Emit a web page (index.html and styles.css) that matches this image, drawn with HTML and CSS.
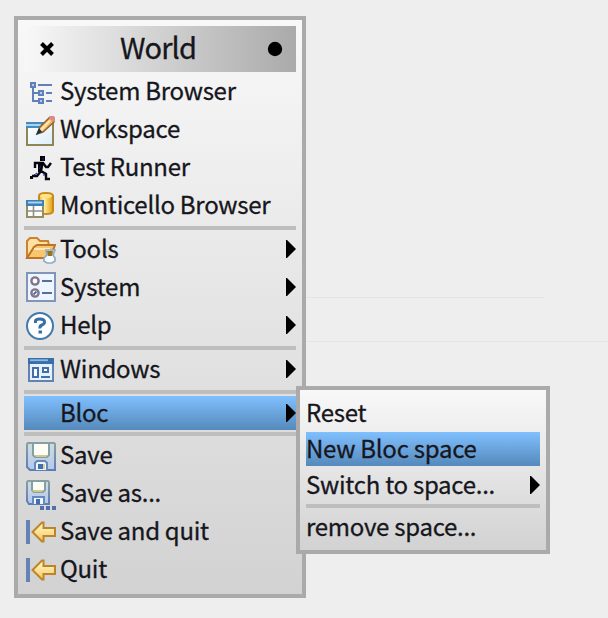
FILE: index.html
```html
<!DOCTYPE html>
<html lang="en">
<head>
<meta charset="utf-8">
<title>World</title>
<link rel="stylesheet" href="styles.css">
</head>
<body>
<div class="trace trace-short"></div>
<div class="trace trace-long"></div>
<svg class="defs" width="0" height="0">
  <defs>
    <linearGradient id="gold" x1="0" y1="0" x2="0" y2="1"><stop offset="0" stop-color="#fffbd0"/><stop offset="1" stop-color="#f6c75c"/></linearGradient>
    <linearGradient id="barrel" x1="0" y1="0" x2="1" y2="0"><stop offset="0" stop-color="#f0b030"/><stop offset=".35" stop-color="#fff3a0"/><stop offset="1" stop-color="#e39a10"/></linearGradient>
    <linearGradient id="paper" x1="0" y1="0" x2="1" y2="1"><stop offset="0" stop-color="#fff"/><stop offset="1" stop-color="#dceefa"/></linearGradient>
    <linearGradient id="disk" x1="0" y1="0" x2="0" y2="1"><stop offset="0" stop-color="#cfdde0"/><stop offset="1" stop-color="#b4c8ea"/></linearGradient>
    <linearGradient id="edge" x1="0" y1="0" x2="0" y2="1"><stop offset="0" stop-color="#8b9fa3"/><stop offset="1" stop-color="#5c7eb8"/></linearGradient>
  </defs>
</svg>
<nav class="menu world">
  <header class="title">
    <svg class="close" width="16" height="16" viewBox="0 0 16 16"><path d="M2.5 2.5l11 11M13.5 2.500l-11 11"/></svg>
    <h1>World</h1>
    <svg class="pin" width="16" height="16" viewBox="0 0 16 16"><circle cx="8" cy="8" r="7.2"/></svg>
  </header>
  <div class="item">
    <svg class="icon low" viewBox="0 0 32 32"><g fill="#b7cce8" stroke="#5f80b8" stroke-width="2"><path fill="none" d="M9 11v14h5M9 17h5M14 9h14M22 17h6M22 25h6"/><path d="M7 7h4v4H7zM15 15h4v4h-4zM15 23h4v4h-4z"/></g></svg>
    <span>System Browser</span>
  </div>
  <div class="item">
    <svg class="icon low" viewBox="0 0 32 32"><path d="M3 9h26v22H3z" fill="url(#paper)" stroke="#8d8756" stroke-width="2"/><path d="M2 8h19v6H2z" fill="#438bc0"/><path d="M2 10h15v2H2z" fill="#a5d4ef"/><path d="M13 20l3-7L26 3l4 1v4L19 18z" fill="#eeb85f" stroke="#965e32" stroke-width="1.5"/><path d="M16 15L25 6l2 1-9 10z" fill="#ffe5a8"/><path d="M26 2h4l1 2v3l-2 1-4-4z" fill="#dc8b87"/><path d="M12 21l3-7 3 4z" fill="#17344f"/></svg>
    <span>Workspace</span>
  </div>
  <div class="item">
    <svg class="icon" viewBox="0 0 32 32"><path d="M16 5h5v5h-5z" fill="#000"/><path d="M11 17v-5h8l3 4h2l3-4M8 25h5l4-5 5 3v5h4" fill="none" stroke="#050513" stroke-width="2.4"/><path d="M14 11h6l-2 10h-4z" fill="#000"/><path d="M6 25h3v3H6z" fill="#050513"/><path d="M19 6v4M17 15l-2 3M20 22v3M13 22l-3 2" fill="none" stroke="#1020a0" stroke-width="1"/></svg>
    <span>Test Runner</span>
  </div>
  <div class="item">
    <svg class="icon" viewBox="0 0 32 32"><path d="M15 7v15c0 4 14 4 14 0V7c0-4-14-4-14 0z" fill="url(#barrel)" stroke="#c88b18" stroke-width="2"/><ellipse cx="22" cy="7" rx="6" ry="2" fill="#ffe38c"/><path d="M3 12h16v16H3z" fill="#fff" stroke="#958d64" stroke-width="2"/><path d="M2 11h18v6H2z" fill="#3d80b8"/><path d="M4 12.500h14v2H4z" fill="#a5d5f0"/><path d="M9.500 17v10M4 22h14" stroke="#8e9087" stroke-width="1.6"/></svg>
    <span>Monticello Browser</span>
  </div>
  <hr>
  <div class="item">
    <svg class="icon" viewBox="0 0 32 32"><path d="M3 25V8l3-3h7l3 3h8l1 4v13z" fill="#ffe1a3" stroke="#c9842d" stroke-width="2"/><path d="M3 25l7-11 3-2h18l-5 13z" fill="#f9c66e" stroke="#bd7429" stroke-width="2"/><path d="M10 16h16" stroke="#ffe9b7" stroke-width="2"/><path d="M22 17h9l-2 5 2 3v3l-3 2h-5l-3-2v-3l3-3z" fill="#f7faff" stroke="#8eabc7" stroke-width="1.7"/><path d="M23 18h6l-1 5h-4z" fill="#99741d"/></svg>
    <span>Tools</span><i class="arrow"></i>
  </div>
  <div class="item">
    <svg class="icon" viewBox="0 0 32 32"><path d="M3 2h28v28H3z" fill="#edf5ff" stroke="#8194b9" stroke-width="2"/><g fill="#fff" stroke="#81758f" stroke-width="2.4"><circle cx="11" cy="10" r="3.6"/><circle cx="11" cy="22" r="3.600"/></g><path d="M9.500 23.500l3-3M18 10h10M18 22h10" stroke="#586f91" stroke-width="2"/></svg>
    <span>System</span><i class="arrow"></i>
  </div>
  <div class="item">
    <svg class="icon low" viewBox="0 0 32 32"><circle cx="16" cy="16" r="13" fill="#fff" stroke="#4079ab" stroke-width="2"/><path d="M11.500 13v-2q0-2 4.500-2t4.500 3q0 2-2.500 3t-2 3.500" fill="none" stroke="#356fa5" stroke-width="3"/><path d="M14.500 20.500h3.500v3h-3.500z" fill="#356fa5"/></svg>
    <span>Help</span><i class="arrow"></i>
  </div>
  <hr>
  <div class="item">
    <svg class="icon low" viewBox="0 0 32 32"><path d="M5 6h24v21H5z" fill="#e6f2fb" stroke="#6182b4" stroke-width="2"/><path d="M4 4h26v6H4z" fill="#386fa9"/><path d="M6 5.300h18v1.800H6z" fill="#8ab8e1"/><path d="M9 14h5v9H9zM19 14h5v4h-5zM17 23h9" fill="#fff" stroke="#426fa7" stroke-width="2"/></svg>
    <span>Windows</span><i class="arrow"></i>
  </div>
  <hr>
  <div class="item selected">
    <span class="icon"></span>
    <span>Bloc</span><i class="arrow"></i>
  </div>
  <hr>
  <div class="item">
    <svg class="icon low" viewBox="0 0 32 32"><path d="M3 4l1-1h26l1 1v26H6l-3-3z" fill="url(#disk)" stroke="url(#edge)" stroke-width="2"/><path d="M9 3h16v12l-2 2H11l-2-2z" fill="#fdfdf5" stroke="#85a0a4" stroke-width="2"/><path d="M10 15h14l-2 2H12z" fill="#d3c88b"/><path d="M11 30v-7l2-2h8l2 2v7" fill="#edf5fd" stroke="#668abd" stroke-width="2"/><path d="M14 24h5v5h-5z" fill="#436fae"/><path d="M19 24h2v5h-2z" fill="#ddd49d"/></svg>
    <span>Save</span>
  </div>
  <div class="item">
    <svg class="icon low" viewBox="0 0 32 32"><path d="M3 4l1-1h20l1 1v22H5l-2-3z" fill="url(#disk)" stroke="url(#edge)" stroke-width="2"/><path d="M8 3h13v9l-2 2h-9l-2-2z" fill="#fdfdf5" stroke="#85a0a4" stroke-width="2"/><path d="M8 12h12l-2 2h-8z" fill="#d3c88b"/><path d="M9 26v-7h11v7" fill="#edf5fd" stroke="#668abd" stroke-width="2"/><path d="M12 21h4v5h-4z" fill="#436fae"/><path d="M16 28h4v4h-4zM22 28h4v4h-4zM28 28h4v4h-4z" fill="#516fa9"/></svg>
    <span>Save as...</span>
  </div>
  <div class="item">
    <svg class="icon low" viewBox="0 0 32 32"><path d="M2 4h4v24H2z" fill="#6482b5"/><path d="M8.500 16L18 6.500h1.500V12H31v8H19.500v5.500H18z" fill="url(#gold)" stroke="#bd8429" stroke-width="2"/></svg>
    <span>Save and quit</span>
  </div>
  <div class="item">
    <svg class="icon low" viewBox="0 0 32 32"><path d="M2 4h4v24H2z" fill="#6482b5"/><path d="M8.500 16L18 6.500h1.500V12H31v8H19.500v5.500H18z" fill="url(#gold)" stroke="#bd8429" stroke-width="2"/></svg>
    <span>Quit</span>
  </div>
</nav>
<nav class="menu submenu">
  <div class="item"><span>Reset</span></div>
  <div class="item selected"><span>New Bloc space</span></div>
  <div class="item"><span>Switch to space...</span><i class="arrow"></i></div>
  <hr>
  <div class="item"><span>remove space...</span></div>
</nav>
</body>
</html>
```

FILE: styles.css
```css
* { box-sizing: border-box; }
body {
  margin: 0;
  padding: 16px 14px;
  width: 608px;
  height: 618px;
  overflow: hidden;
  position: relative;
  background: #eee;
  color: #16161c;
  font: 24px/34px "Noto Sans CJK SC", "Open Sans", sans-serif;
  letter-spacing: -0.27px;
  -webkit-text-stroke: 0.3px #16161c;
}
.defs { position: absolute; }
.menu {
  border: 4px solid #aaa;
  padding: 6px;
  background: linear-gradient(#f8f8f8, #d2d2d2);
}
.world { position: relative; width: 292px; height: 582px; }
.title {
  display: flex;
  align-items: center;
  justify-content: space-between;
  height: 46px;
  padding: 0 13px 0 15px;
  background: linear-gradient(90deg, #f8f8f8, #aaa);
}
.title h1 { margin: 0 6px 5px 0; font-size: 29px; line-height: 41px; font-weight: 400; letter-spacing: -0.9px; }
.close { fill: none; stroke: #000; stroke-width: 4; }
.item {
  display: flex;
  align-items: center;
  height: 38px;
  white-space: nowrap;
}
.item > span { margin-bottom: 2px; }
.icon { flex: none; width: 32px; height: 32px; margin-right: 4px; }
.low { margin-top: 2px; }
.arrow {
  width: 10px;
  height: 18px;
  margin-left: auto;
  background: #000;
  clip-path: polygon(0 0, 10% 0, 100% 50%, 10% 100%, 0 100%);
}
hr { height: 4px; margin: 2px 0 0; border: 0; background: #bebebe; }
.selected { background: linear-gradient(#80c0ff, #5589bb); }
.world .selected { height: 34px; margin-top: 2px; }
.submenu {
  position: absolute;
  left: 296px;
  top: 386px;
  width: 254px;
  height: 168px;
  display: flex;
  flex-direction: column;
  gap: 2px;
}
.submenu .item { height: 34px; }
.submenu hr { width: 100%; margin: 0; }
.trace { position: absolute; left: 306px; height: 1px; background: #e4e4e4; }
.trace-short { top: 297px; width: 238px; }
.trace-long { top: 341px; width: 302px; }
```
